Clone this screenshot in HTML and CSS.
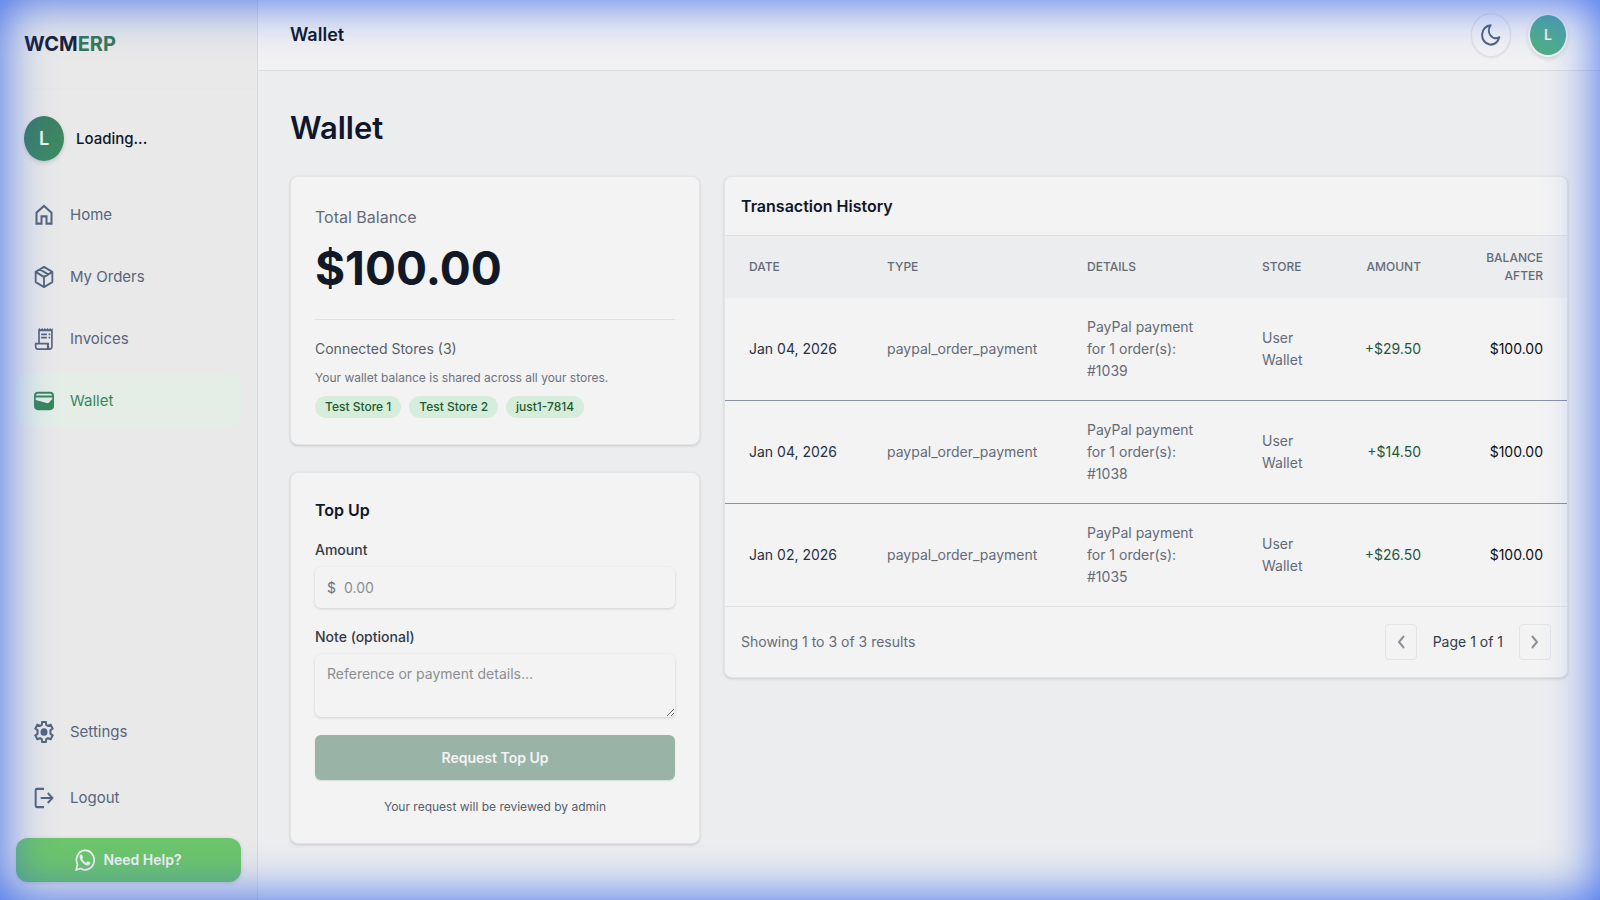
FILE: index.html
```html
<!DOCTYPE html>
<html lang="en">
<head>
    <meta charset="UTF-8">
    <meta name="viewport" content="width=device-width, initial-scale=1.0">
    <title>Wallet - WCMERP</title>
    <link rel="stylesheet" href="styles.css">
</head>
<body>
    <div class="app">
        <aside class="sidebar">
            <div class="brand">WCM<span>ERP</span></div>

            <div class="profile">
                <div class="avatar">L</div>
                <span class="profile-name">Loading...</span>
            </div>

            <nav class="nav">
                <a href="#" class="nav-item">
                    <svg class="icon" viewBox="0 0 24 24" preserveAspectRatio="none" fill="none" stroke="currentColor" stroke-width="2.400"><path d="M3 9.500 12 2l9 7.500V21.500h-6v-8H9v8H3z"/></svg>
                    Home
                </a>
                <a href="#" class="nav-item">
                    <svg class="icon" viewBox="0 0 24 24" preserveAspectRatio="none" fill="none" stroke="currentColor" stroke-width="2.200" stroke-linejoin="round"><path d="M12 1 22 6.500v11L12 23 2 17.500v-11zM2 6.500 12 12l10-5.500M12 12v11M7 3.700l10 5.500"/></svg>
                    My Orders
                </a>
                <a href="#" class="nav-item">
                    <svg class="icon" viewBox="0 0 24 24" preserveAspectRatio="none" fill="currentColor"><path d="M22.500 0 21 1.500 19.400 0l-1.600 1.500L16.200 0l-1.600 1.500L13 0l-1.600 1.500L9.800 0 8.200 1.500 6.600 0 5 1.500V16H1v4.500C1 22.400 2.500 24 4.400 24h14.700c1.900 0 3.400-1.600 3.400-3.500zM15.500 22H4.400c-.8 0-1.400-.7-1.400-1.500V18h12.500zm5-1.500c0 .8-.5 1.500-1.200 1.500s-1.300-.7-1.300-1.500V16H7V3.500h13.500z"/><path d="M8.500 6h7v2h-7zM17.500 6h2v2h-2zM8.500 9.500h7v2h-7zM17.500 9.500h2v2h-2z"/></svg>
                    Invoices
                </a>
                <a href="#" class="nav-item active">
                    <svg class="icon" viewBox="0 0 24 24" preserveAspectRatio="none" fill="currentColor"><path d="M5 2h14c3.300 0 5 1.500 5 4.500v11c0 3-1.700 4.500-5 4.500H5c-3.300 0-5-1.500-5-4.500v-11C0 3.500 1.700 2 5 2z"/><path class="icon-cut" d="M5.500 4h13c2 0 3 .7 3.300 2H2.200c.3-1.300 1.300-2 3.300-2zM2 8.200h20v2.100c-2 0-2.500 3-5 3.900-1 .3-2 .1-3-.2L2 10.800z"/></svg>
                    Wallet
                </a>
            </nav>

            <div class="nav nav-bottom">
                <a href="#" class="nav-item">
                    <svg class="icon" viewBox="0 0 24 24" preserveAspectRatio="none"><path d="M9.800 1h4.400l.5 3.200 2 1.100L20 4.100l2.300 4-2.600 2.100v3.600l2.600 2.100-2.300 4-3.300-1.200-2 1.100-.5 3.200H9.800l-.5-3.200-2-1.100L4 19.900l-2.300-4 2.600-2.100v-3.600L1.700 8.100 4 4.100l3.300 1.200 2-1.100z" fill="none" stroke="currentColor" stroke-width="2.400"/><circle cx="12" cy="12" r="4.200" fill="currentColor"/></svg>
                    Settings
                </a>
                <a href="#" class="nav-item">
                    <svg class="icon" viewBox="0 0 24 24" preserveAspectRatio="none" fill="none" stroke="currentColor" stroke-width="2.400"><path d="M12 2H3.500Q2 2 2 3.500v17Q2 22 3.500 22H12M8 12h14M16.500 6.500 22 12l-5.500 5.500"/></svg>
                    Logout
                </a>
            </div>

            <a href="#" class="help-button">
                <svg class="icon" viewBox="0 0 24 24" preserveAspectRatio="none" fill="none" stroke="currentColor" stroke-width="2"><path d="M1.300 22.800 3 17A10.600 10.600 0 1 1 7 21.200z"/><path fill="currentColor" stroke="none" d="M8.300 6.500c-.3-.6-.6-.6-.9-.6-.8 0-1.900.9-1.900 2.500 0 4 6 9.600 9.500 9.600 2 0 3.300-1.100 3.300-2.900 0-.3-.1-.5-.4-.6l-2.400-1.200c-.3-.1-.6-.1-.8.2l-1 1.300c-.2.2-.4.200-.7.100-2-.9-3.300-2.300-4.200-4-.2-.3 0-.5.100-.7l.7-.9c.2-.3.100-.5 0-.7z"/></svg>
                Need Help?
            </a>
        </aside>

        <div class="page">
            <header class="topbar">
                <span class="topbar-title">Wallet</span>
                <div class="topbar-actions">
                    <button type="button" class="theme-toggle" aria-label="Toggle theme">
                        <svg class="icon" viewBox="0 0 24 24" preserveAspectRatio="none" fill="none" stroke="currentColor" stroke-width="2.400" stroke-linejoin="round"><path d="M22 14.500A10.500 10.500 0 1 1 11.500 1.500 8.500 8.500 0 0 0 22 14.500z"/></svg>
                    </button>
                    <button type="button" class="user-button">L</button>
                </div>
            </header>

            <main class="content">
                <h1>Wallet</h1>

                <div class="columns">
                    <div class="left-column">
                        <section class="card balance">
                            <p class="balance-label">Total Balance</p>
                            <p class="balance-value">$100.00</p>
                            <div class="stores">
                                <h3>Connected Stores (3)</h3>
                                <p class="stores-note">Your wallet balance is shared across all your stores.</p>
                                <div class="tags">
                                    <span class="tag">Test Store 1</span>
                                    <span class="tag">Test Store 2</span>
                                    <span class="tag">just1-7814</span>
                                </div>
                            </div>
                        </section>

                        <form class="card top-up">
                            <h2>Top Up</h2>
                            <label for="amount">Amount</label>
                            <div class="amount-field">
                                <span>$</span>
                                <input type="text" id="amount" placeholder="0.00">
                            </div>
                            <label for="note">Note (optional)</label>
                            <textarea id="note" placeholder="Reference or payment details..."></textarea>
                            <button type="button" class="submit-button">Request Top Up</button>
                            <p class="form-hint">Your request will be reviewed by admin</p>
                        </form>
                    </div>

                    <section class="card history">
                        <h2>Transaction History</h2>
                        <table>
                            <colgroup>
                                <col class="col-date">
                                <col class="col-type">
                                <col>
                                <col class="col-store">
                                <col class="col-amount">
                                <col class="col-balance">
                            </colgroup>
                            <thead>
                                <tr>
                                    <th>Date</th>
                                    <th>Type</th>
                                    <th>Details</th>
                                    <th>Store</th>
                                    <th class="right">Amount</th>
                                    <th class="right">Balance After</th>
                                </tr>
                            </thead>
                            <tbody>
                                <tr>
                                    <td class="date">Jan 04, 2026</td>
                                    <td>paypal_order_payment</td>
                                    <td>PayPal payment for 1 order(s): #1039</td>
                                    <td>User Wallet</td>
                                    <td class="right amount">+$29.50</td>
                                    <td class="right total">$100.00</td>
                                </tr>
                                <tr>
                                    <td class="date">Jan 04, 2026</td>
                                    <td>paypal_order_payment</td>
                                    <td>PayPal payment for 1 order(s): #1038</td>
                                    <td>User Wallet</td>
                                    <td class="right amount">+$14.50</td>
                                    <td class="right total">$100.00</td>
                                </tr>
                                <tr>
                                    <td class="date">Jan 02, 2026</td>
                                    <td>paypal_order_payment</td>
                                    <td>PayPal payment for 1 order(s): #1035</td>
                                    <td>User Wallet</td>
                                    <td class="right amount">+$26.50</td>
                                    <td class="right total">$100.00</td>
                                </tr>
                            </tbody>
                        </table>
                        <div class="pagination">
                            <span>Showing 1 to 3 of 3 results</span>
                            <div class="pager">
                                <button type="button" aria-label="Previous page">
                                    <svg viewBox="0 0 8 14" fill="none" stroke="currentColor" stroke-width="2"><path d="M7 1 2 7l5 6"/></svg>
                                </button>
                                <span class="page-number">Page 1 of 1</span>
                                <button type="button" aria-label="Next page">
                                    <svg viewBox="0 0 8 14" fill="none" stroke="currentColor" stroke-width="2"><path d="m1 1 5 6-5 6"/></svg>
                                </button>
                            </div>
                        </div>
                    </section>
                </div>
            </main>
        </div>
    </div>

    <div class="edge-glow"></div>
</body>
</html>
```
FILE: styles.css
```css
* {
    box-sizing: border-box;
}

body {
    margin: 0;
    font-family: Inter, "Liberation Sans", sans-serif;
    font-size: 14px;
    line-height: 22px;
    color: #0f172a;
    background-color: #ecedef;
}

h1, h2, h3, p {
    margin: 0;
}

a {
    text-decoration: none;
}

button, input, textarea {
    font: inherit;
}

.app {
    display: flex;
    min-height: 100vh;
}

/* Sidebar */
.sidebar {
    flex: 0 0 258px;
    display: flex;
    flex-direction: column;
    padding: 0 16px 18px;
    background-color: #e9e9e9;
    border-right: 1px solid #d8dadd;
}

.brand {
    height: 89px;
    margin: 0 -16px;
    padding: 0 24px;
    line-height: 88px;
    font-size: 20px;
    font-weight: 700;
    color: #16213a;
    border-bottom: 1px solid #e6e7e8;
}

.brand span {
    color: #33785a;
}

.profile {
    display: flex;
    align-items: center;
    gap: 12px;
    padding: 27px 8px;
}

.avatar {
    width: 40px;
    height: 45px;
    border-radius: 50%;
    background: linear-gradient(135deg, #3b7a66, #3e8f62);
    color: #f3f3f3;
    font-size: 18px;
    font-weight: 600;
    line-height: 45px;
    text-align: center;
    box-shadow: 0 2px 4px rgba(0, 0, 0, 0.15);
}

.profile-name {
    font-size: 15px;
    font-weight: 500;
}

.nav {
    display: flex;
    flex-direction: column;
    gap: 9px;
}

.nav-bottom {
    gap: 13px;
    margin-top: auto;
    margin-bottom: 14px;
}

.nav-item {
    display: flex;
    align-items: center;
    gap: 16px;
    height: 53px;
    padding: 0 18px;
    border-radius: 12px;
    color: #56657d;
    font-size: 15px;
}

.nav-item.active {
    background-color: #e4eee7;
    color: #38875c;
}

.icon {
    flex: none;
    width: 20px;
    height: 22px;
}

.icon-cut {
    fill: #e4eee7;
}

.help-button {
    display: flex;
    align-items: center;
    justify-content: center;
    gap: 8px;
    height: 44px;
    border-radius: 12px;
    background-color: #6dc56b;
    color: #f3f3f3;
    font-weight: 600;
    box-shadow: 0 1px 4px rgba(0, 0, 0, 0.15);
}

/* Top bar */
.page {
    flex: 1;
    min-width: 0;
}

.topbar {
    display: flex;
    align-items: center;
    justify-content: space-between;
    height: 71px;
    padding: 0 32px;
    background-color: #f1f1f3;
    border-bottom: 1px solid #dcdddf;
}

.topbar-title {
    font-size: 18px;
    font-weight: 600;
}

.topbar-actions {
    display: flex;
    align-items: center;
    gap: 17px;
}

.theme-toggle,
.user-button {
    display: flex;
    align-items: center;
    justify-content: center;
    width: 40px;
    height: 44px;
    padding: 0;
    border-radius: 50%;
}

.theme-toggle {
    border: 1px solid #dddfe4;
    background-color: #f2f2f4;
    color: #56657d;
    box-shadow: 0 1px 2px rgba(0, 0, 0, 0.08);
}

.user-button {
    border: 2px solid #f3f3f3;
    background: linear-gradient(45deg, #4fae80, #52aaa0);
    color: #f3f3f3;
    font-weight: 600;
    box-shadow: 0 2px 4px rgba(0, 0, 0, 0.12);
}

/* Content */
.content {
    padding: 35px 32px 48px;
}

h1 {
    margin-bottom: 26px;
    font-size: 31px;
    font-weight: 600;
    line-height: 44px;
}

h2 {
    font-size: 16px;
    font-weight: 600;
}

.columns {
    display: grid;
    grid-template-columns: repeat(3, 1fr);
    gap: 24px;
    align-items: start;
}

.left-column {
    display: flex;
    flex-direction: column;
    gap: 27px;
}

.card {
    background-color: #f3f3f3;
    border: 1px solid #e2e4e6;
    border-radius: 8px;
    box-shadow: 0 1px 3px rgba(0, 0, 0, 0.15);
}

.balance,
.top-up {
    padding: 26px 24px;
}

.top-up {
    padding-bottom: 25px;
}

.balance-label {
    font-size: 16px;
    line-height: 28px;
    color: #646b78;
}

.balance-value {
    padding: 5px 0 3px;
    font-size: 46px;
    font-weight: 700;
    line-height: 64px;
    color: #111827;
}

.stores {
    margin-top: 16px;
    padding-top: 18px;
    border-top: 1px solid #e0e1e3;
}

.stores h3 {
    font-size: 14px;
    font-weight: 400;
    color: #565e6b;
}

.stores-note {
    margin: 7px 0;
    font-size: 12px;
    color: #6b7280;
}

.tags {
    display: flex;
    flex-wrap: wrap;
    gap: 8px;
}

.tag {
    padding: 0 10px;
    border-radius: 12px;
    background-color: #d7eddb;
    color: #23592f;
    font-size: 12px;
    font-weight: 500;
}

.top-up {
    display: flex;
    flex-direction: column;
}

.top-up h2 {
    margin-bottom: 18px;
}

.top-up label {
    margin-bottom: 6px;
    font-weight: 500;
    color: #323b4a;
}

.amount-field,
.top-up textarea {
    border: 0;
    border-radius: 6px;
    background-color: #f3f3f3;
    box-shadow: 0 1px 3px rgba(0, 0, 0, 0.15);
}

.amount-field {
    display: flex;
    align-items: center;
    gap: 8px;
    height: 41px;
    margin-bottom: 18px;
    padding: 0 12px;
    color: #6b7280;
}

.amount-field input {
    flex: 1;
    min-width: 0;
    padding: 0;
    border: 0;
    background: none;
}

.top-up textarea {
    height: 63px;
    margin-bottom: 18px;
    padding: 9px 12px;
    resize: vertical;
}

.top-up ::placeholder {
    color: #8b8e92;
}

.submit-button {
    height: 45px;
    margin-bottom: 16px;
    border: 0;
    border-radius: 6px;
    background-color: #99b4a7;
    color: #f3f3f3;
    font-weight: 600;
    box-shadow: 0 1px 2px rgba(0, 0, 0, 0.1);
}

.form-hint {
    font-size: 12px;
    text-align: center;
    color: #565e6b;
}

/* Transactions */
.history {
    grid-column: span 2;
    overflow: hidden;
}

.history h2 {
    padding: 18px 16px;
    border-bottom: 1px solid #e0e1e3;
}

table {
    width: 100%;
    table-layout: fixed;
    border-collapse: collapse;
}

.col-date {
    width: 138px;
}

.col-type {
    width: 200px;
}

.col-store {
    width: 84px;
}

.col-amount {
    width: 123px;
}

.col-balance {
    width: 122px;
}

th {
    padding: 13px 24px;
    background-color: #ecedef;
    color: #646b78;
    font-size: 12px;
    font-weight: 500;
    line-height: 18px;
    text-align: left;
    text-transform: uppercase;
}

td {
    padding: 18px 24px;
    color: #646b78;
}

tbody tr + tr {
    border-top: 1px solid #8b93a1;
}

.date {
    color: #283243;
    white-space: nowrap;
}

.right {
    text-align: right;
}

.amount {
    color: #24573a;
}

.total {
    color: #0b0f19;
}

.pagination {
    display: flex;
    align-items: center;
    justify-content: space-between;
    padding: 17px 16px;
    border-top: 1px solid #e0e1e3;
    color: #646b78;
}

.pager {
    display: flex;
    align-items: center;
    gap: 16px;
}

.pager button {
    display: flex;
    align-items: center;
    justify-content: center;
    width: 32px;
    height: 36px;
    padding: 0;
    border: 1px solid #e2e4e6;
    border-radius: 4px;
    background: none;
    color: #8d909a;
}

.pager svg {
    width: 8px;
    height: 14px;
}

.page-number {
    color: #323b4a;
}

/* Blue glow around the window */
.edge-glow {
    position: fixed;
    inset: 0;
    pointer-events: none;
    box-shadow: inset 0 0 50px rgba(37, 90, 235, 0.9);
}
```
